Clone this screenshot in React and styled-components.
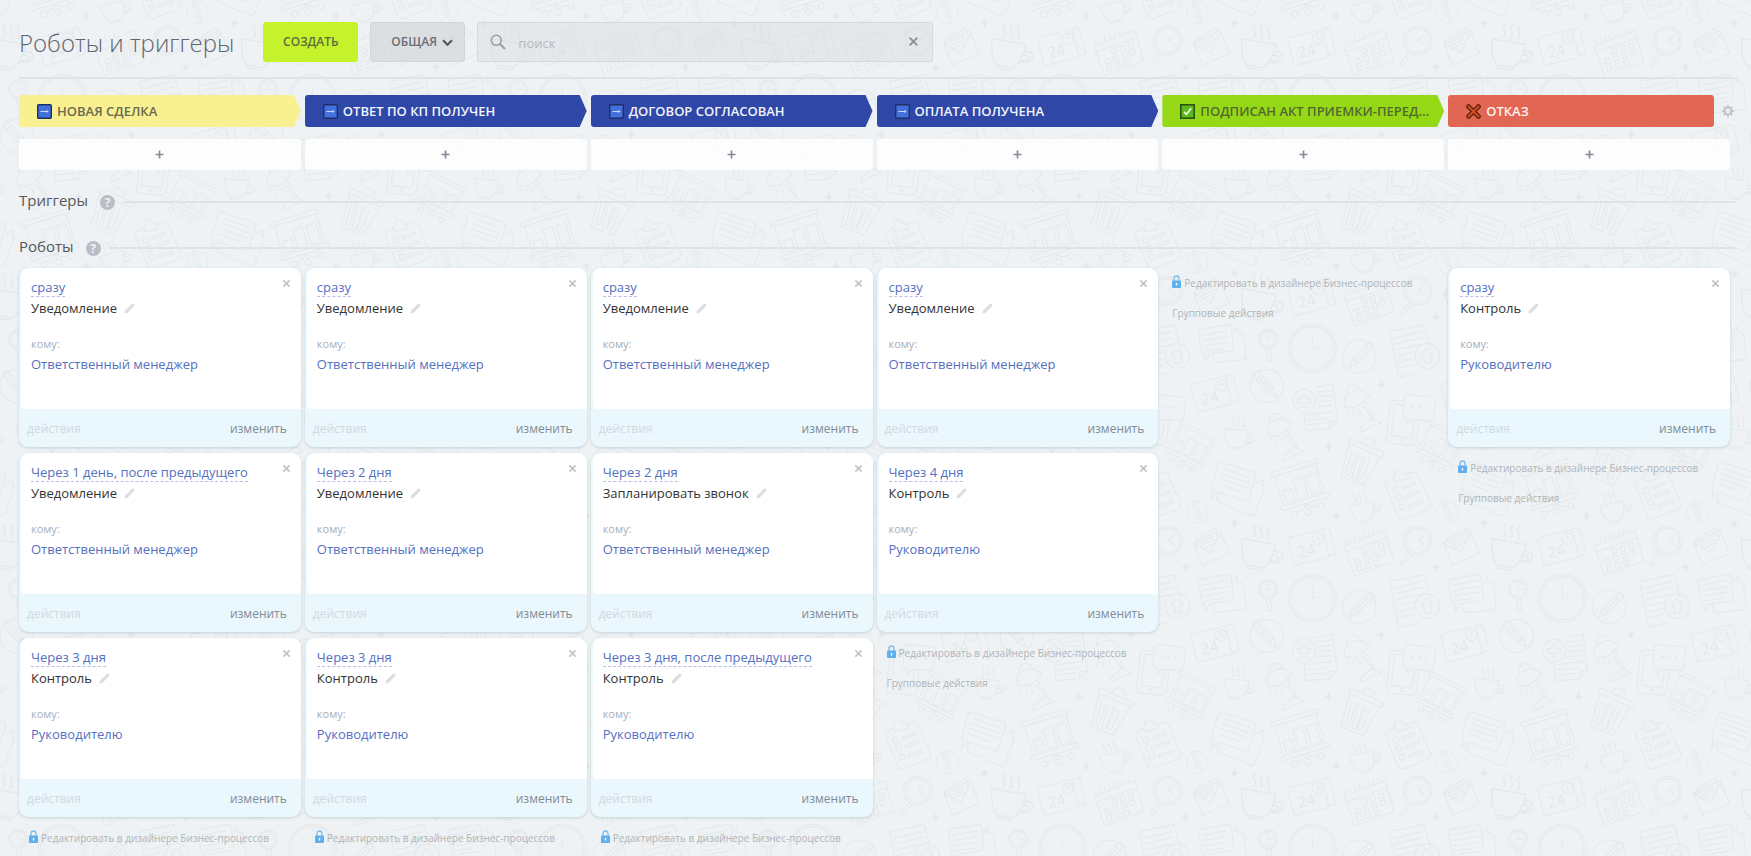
import React from "react";
import styled, { createGlobalStyle, css } from "styled-components";

/* ---------- wallpaper: one 250px tile, drawn on a 750 unit grid ---------- */

const note24 = (x, y) => `<g transform="translate(${x} ${y}) rotate(-14)">
  <rect x="-60" y="-42" width="108" height="86" rx="5"/><path d="M50 -42h14q6 0 6 6v70q0 6-6 6h-14"/>
  <circle cx="28" cy="-18" r="17"/><path d="M28 -29v11h9"/>
  <text x="-40" y="26" font-family="Open Sans, sans-serif" font-size="46" fill="#e4e7e9" stroke="none">24</text></g>`;

const lamp = (x, y) => `<g transform="translate(${x} ${y})">
  <path d="M-34 26q-6-20 8-34 34-28 66 2l-32 30q-20 12-42 2z"/><path d="M-28-10q-2-26 18-28 20 2 22 18"/>
  <path d="M22 14l10 4-4 14-12-4M28 32l22 34M38 30l18 34M14 90l34-28 28 14-26 10-34 18z"/>
  <path d="M-22 38l-6 14M-6 40l-2 16M8 36l6 14"/></g>`;

const board = (x, y, r, s) => `<g transform="translate(${x} ${y}) rotate(${r}) scale(${s})">
  <rect x="-76" y="-66" width="150" height="13" rx="6"/><rect x="-76" y="40" width="150" height="13" rx="6"/>
  <path d="M-66-53v93M64-53v93"/><rect x="-54" y="-2" width="26" height="36" rx="2"/>
  <rect x="-17" y="-26" width="30" height="60" rx="2"/><rect x="24" y="-26" width="30" height="60" rx="2"/>
  <path d="M0 53v18M-4 56q-4 14-32 14M4 56q4 14 32 14"/><circle cx="0" cy="80" r="9"/><circle cx="-42" cy="73" r="9"/><circle cx="42" cy="73" r="9"/></g>`;

const cup = (x, y, r, s) => `<g transform="translate(${x} ${y}) rotate(${r}) scale(${s})">
  <path d="M-38-28h76q0 36-18 56h-38q-18-20-20-56zM-16 34h32"/><path d="M36-12q22-6 22 10-2 16-26 14M37-4q12-2 12 6-2 8-14 6"/>
  <path d="M-14-36q6-8 0-15t0-14M2-36q6-8 0-15t0-14M18-36q6-8 0-15t0-14"/></g>`;

const pencil = (x, y, r, s) => `<g transform="translate(${x} ${y}) rotate(${r}) scale(${s})">
  <circle r="50"/><path d="M-10-52q10-8 20 0v70L0 44l-10-26zM-10-36h20M-10 18h20M0-36v54"/></g>`;

const star = (x, y) => `<path fill="#e5e8ea" d="M${x} ${y - 12}l3 9 8 3-8 3-3 9-3-9-8-3 8-3z"/>`;

const motifs = `
  <circle cx="187" cy="745" r="72"/><circle cx="187" cy="745" r="65"/>
  <path d="M187 710v34h34M187 686v6M187 798v6M128 745h6M240 745h6"/>
  <circle cx="54" cy="718" r="29"/><circle cx="54" cy="718" r="23"/><path d="M54 700v18h16M49 748v10l4 6-1 18h14l-3-18-1-16"/>
  ${pencil(328, 770, 45, 1)}${pencil(50, 108, -42, 1)}${pencil(592, 487, -18, 0.66)}
  <path d="M420 702q-4-12 14-10l88-18 20 72M420 702l26 130 54-13M430 715l84-20M433 732l86-20M436 750l78-17M439 768l52-12M442 786l46-10M445 804l44-10"/>
  <circle cx="532" cy="768" r="37"/><path d="M524 790l-3-24-10 2 17-22 22 15-9 4 3 22z"/>
  <path d="M601 688l82-15q10 0 11 8l6 62q0 9-8 10l-62 8-14 22-2-20q-8 0-9-8l-10-58q0-8 6-9zM606 706l74-14M608 722l74-12M610 738l74-12M612 753l56-8"/>
  <path d="M700 696l14-18-4 18 14 2q6 2 8 10l6 62q0 8-8 9l-78 9q-10 0-12-12l-2-14"/>
  <path d="M198 113l50-11 14 112-24 22-70 7-6-54M238 236l2-22 22 0M200 126l42-5M204 140l40-4M204 155l42-4M202 170l46-4M170 194l78-9M172 210l64-6M174 224l54-5"/>
  <circle cx="162" cy="152" r="34"/><path d="M156 132h12v14h14v12h-14v14h-12v-14h-14v-12h14z"/>
  ${lamp(318, 143)}${lamp(86, 228)}
  <path d="M458 152h-26q-10 0-12 10l-10 104q0 12 10 13l66 7q10 0 12-10l10-66M458 164h-24l-10 92 62 8 8-54"/><circle cx="454" cy="270" r="4"/>
  <path d="M474 133l74 8q10 2 9 12l-6 50q-2 9-12 9l-54-4-12 14v-16q-12 0-14-12l4-52q2-10 11-9z"/><path d="M486 170h4M506 172h4M526 174h4" stroke-width="6"/>
  ${note24(640, 130)}${note24(180, 590)}
  ${cup(708, 265, 6, 0.95)}${cup(340, 486, -16, 0.95)}${cup(20, 612, 10, 1.35)}
  ${board(152, 410, -17, 1)}${board(572, 290, 27, 0.84)}
  <path d="M300 264l98 42q6 5 2 12l-8 4-94-42q-6-6 2-16zM298 284l-26 96 68 26 50-84M338 276q4-14 16-12l16 6q8 6 2 18M306 304l-18 64q-2 8 4 8t8-6l18-60M326 312l-20 68q0 8 6 7t8-7l20-62M348 322l-26 62q0 8 6 6t8-6l24-56"/>
  <path d="M432 384l-22 10q-6 8-2 16l36 90q6 8 16 6l76-30q8-6 6-16l-38-86q-4-8-12-8l-26 6M430 382l4-8q0-18 14-14 14 2 10 10l18 8-2 8-40 10z"/>
  <path d="M428 416l14-5 6 15-14 5zM436 440l14-5 6 15-14 5zM446 466l14-5 6 15-14 5zM456 412l38-15 3 6-38 15zM464 438l42-16 3 6-42 16zM474 466l42-14 3 6-42 14z"/>
  <path d="M664 336l94 30q12 5 8 16l-20 64q-4 10-14 6l-78-26-20 18 6-26q-8-4-4-12l18-60q2-12 10-10zM672 356l80 28M666 370l82 30M662 386l80 28M656 402l66 24"/>
  <path d="M654 434l-2 14q0 8 8 10l90 38q10 4 14-4l30-80-8-4 4-18-22 10"/>
  <circle cx="503" cy="572" r="43"/><circle cx="503" cy="572" r="36"/><path d="M522 556l-16 14 18 16M478 608l-28 32q2 8 10 4l28-32"/>
  <path d="M580 578l80-36 28 68-80 36zM582 580l50 28 28-56M588 592l-2-22 62-36 6 30M594 580l48-22M598 590l46-22M604 598l42-20"/>
  <path d="M282 588l122-46 28 92-118 44zM288 606l122-42M288 580l-2-10M302 574l-2-10M316 569l-2-10M330 564l-2-10M344 559l-2-10M358 554l-2-10M372 549l-2-10M386 545l-2-10"/>
  <path d="M334 598l14-4 4 14-14 4zM359 590l14-4 4 14-14 4zM384 582l14-4 4 14-14 4zM314 628l14-4 4 14-14 4zM339 620l14-4 4 14-14 4zM364 612l14-4 4 14-14 4zM388 604l14-4 4 14-14 4zM319 650l14-4 4 14-14 4zM345 642l14-4 4 14-14 4zM370 634l14-4 4 14-14 4z"/>
  ${star(394, 104)}${star(236, 290)}${star(259, 498)}${star(703, 520)}${star(557, 652)}`;

const tile = `<svg xmlns="http://www.w3.org/2000/svg" width="250" height="250" viewBox="0 0 750 750">
  <g id="m" fill="none" stroke="#e6e9eb" stroke-width="3.4" stroke-linejoin="round" stroke-linecap="round">${motifs}</g>
  <use href="#m" x="750"/><use href="#m" x="-750"/><use href="#m" y="-750"/><use href="#m" x="-750" y="-750"/><use href="#m" x="750" y="-750"/></svg>`;

const wallpaper = `url("data:image/svg+xml,${encodeURIComponent(tile)}")`;

const GlobalStyle = createGlobalStyle`
  *, *::before, *::after { box-sizing: border-box; }
  body {
    margin: 0;
    min-height: 100vh;
    background: #eef2f4 ${wallpaper} 0 100px;
    font-family: "Open Sans", "Noto Sans", sans-serif;
    color: #333;
  }
  button, input, select { font-family: inherit; }
  button { border: 0; padding: 0; background: none; cursor: pointer; }
  a { text-decoration: none; }
`;

/* ---------- page parts ---------- */

const Page = styled.main`
  padding: 22px 16px 0 19px;
`;

const Toolbar = styled.header`
  display: flex;
  align-items: center;
  height: 57px;
  padding-bottom: 16px;
  border-bottom: 2px solid #e0e2e4;
`;

const Title = styled.h1`
  margin: 0 29px 0 0;
  padding-top: 2px;
  font-size: 24px;
  line-height: 38px;
  font-weight: 300;
  color: #5d6472;
  white-space: nowrap;
`;

const CreateButton = styled.button`
  width: 95px;
  height: 40px;
  margin-right: 12px;
  border-radius: 3px;
  background: #c6f22b;
  color: #5f6b43;
  font-size: 12px;
  font-weight: 600;
`;

const SelectBox = styled.div`
  position: relative;
  width: 95px;
  height: 40px;
  margin-right: 12px;

  svg {
    position: absolute;
    right: 12px;
    top: 17px;
    pointer-events: none;
  }
`;

const ScopeSelect = styled.select`
  appearance: none;
  width: 100%;
  height: 100%;
  padding: 0 0 0 20px;
  border: 1px solid #d3d6d8;
  border-radius: 3px;
  background: rgba(205, 208, 210, 0.55);
  color: #6b6f73;
  font-size: 12px;
  font-weight: 600;
`;

const SearchBox = styled.form`
  display: flex;
  align-items: center;
  flex: 0 1 456px;
  height: 40px;
  padding: 0 13px 0 12px;
  border: 1px solid #d5d9db;
  border-radius: 2px;
  background: rgba(216, 220, 223, 0.45);
`;

const SearchInput = styled.input`
  flex: 1;
  min-width: 0;
  padding: 2px 12px 0;
  border: 0;
  outline: 0;
  background: none;
  font-size: 13px;
  color: #555;

  &::placeholder { color: #b4b9be; opacity: 1; }
`;

const Columns = styled.div`
  display: grid;
  grid-template-columns: repeat(6, minmax(0, 1fr));
  gap: 4px;
  align-items: start;
  margin-right: 5px;
`;

const StageCell = styled.div`
  display: flex;
  flex-direction: column;
  gap: 12px;
  padding-top: 16px;
`;

const StageTop = styled.div`
  display: flex;
  align-items: center;
  justify-content: space-between;
`;

const Stage = styled.div`
  display: flex;
  align-items: center;
  gap: 5px;
  flex: 1;
  min-width: 0;
  height: 32px;
  padding: 0 18px;
  border-radius: 3px;
  background: ${(p) => p.$bg};
  color: ${(p) => p.$ink};
  font-size: 13px;
  font-weight: 600;
  white-space: nowrap;
  ${(p) =>
    p.$arrow &&
    css`
      clip-path: polygon(0 0, calc(100% - 7px) 0, 100% 50%, calc(100% - 7px) 100%, 0 100%);
    `}

  svg { flex: none; }
`;

const GearButton = styled.button`
  display: flex;
  margin: 0 -4px 0 8px;
`;

const AddButton = styled.button`
  display: flex;
  align-items: center;
  justify-content: center;
  height: 31px;
  border-radius: 3px;
  background: rgba(255, 255, 255, 0.85);
`;

const Section = styled.div`
  display: flex;
  align-items: center;
  height: 24px;
  margin-top: ${(p) => p.$gap}px;

  &::after {
    content: "";
    flex: 1;
    height: 2px;
    margin-left: 8px;
    background: #e0e2e4;
  }
`;

const SectionTitle = styled.h2`
  margin: 0;
  padding-bottom: 4px;
  font-size: 15px;
  line-height: 20px;
  font-weight: 400;
  color: #55585c;
`;

const HelpButton = styled.button`
  width: 15px;
  height: 15px;
  margin-left: 12px;
  border-radius: 50%;
  background: #b9bdc6;
  color: #eef2f4;
  font-size: 12px;
  line-height: 15px;
  font-weight: 700;
`;

const Board = styled(Columns)`
  padding-top: 8px;
`;

const RobotList = styled.div`
  display: flex;
  flex-direction: column;
  gap: 6px;
`;

const Card = styled.article`
  border-radius: 9px;
  background: #eaf7fd;
  box-shadow: 0 1px 3px rgba(120, 150, 165, 0.35);
  overflow: hidden;
`;

const CardBody = styled.div`
  position: relative;
  display: flex;
  flex-direction: column;
  align-items: flex-start;
  height: 141px;
  margin-left: 2px;
  padding: 11px 10px 0;
  border-radius: 8px 0 0 4px;
  background: #fff;
`;

const Delay = styled.a`
  font-size: 13px;
  line-height: 17px;
  color: #5570c0;
  border-bottom: 1px dashed #b4c0e4;
`;

const RobotName = styled.h3`
  display: flex;
  align-items: center;
  gap: 7px;
  margin: 1px 0 16px;
  font-size: 13px;
  line-height: 20px;
  font-weight: 400;
  color: #333;
`;

const FieldLabel = styled.span`
  font-size: 11px;
  line-height: 20px;
  color: #a9adba;
`;

const Person = styled.a`
  font-size: 13px;
  line-height: 20px;
  color: #5570c0;
`;

const CloseButton = styled.button`
  position: absolute;
  top: 11px;
  right: 10px;
  display: flex;
`;

const CardFooter = styled.div`
  display: flex;
  align-items: center;
  justify-content: space-between;
  height: 38px;
  padding: 2px 14px 0 8px;
`;

const FooterLink = styled.a`
  font-size: 12px;
  line-height: 20px;
  color: ${(p) => (p.$faint ? "#cfdae2" : "#7f8d96")};
`;

const LinkList = styled.nav`
  display: flex;
  flex-direction: column;
  align-items: flex-start;
  padding: 0 10px;
`;

const ToolLink = styled.a`
  display: flex;
  align-items: center;
  gap: 3px;
  font-size: 10px;
  line-height: 30px;
  color: #b0b5b9;
  white-space: nowrap;

  svg { margin-bottom: 3px; }
`;

/* ---------- icons ---------- */

const Cross = ({ size, color, width }) => (
  <svg width={size} height={size} viewBox="0 0 10 10" aria-hidden="true">
    <path d="M1.5 1.5l7 7M8.5 1.5l-7 7" stroke={color} strokeWidth={width} />
  </svg>
);

const Plus = () => (
  <svg width="9" height="9" viewBox="0 0 9 9" aria-hidden="true">
    <path d="M4.500.500v8M.500 4.500h8" stroke="#868b97" strokeWidth="1.700" />
  </svg>
);

const Pencil = () => (
  <svg width="11" height="11" viewBox="0 0 11 11" aria-hidden="true">
    <path d="M.4 10.600l.7-3L7.900.8a1.200 1.200 0 0 1 1.600 0l.7.700a1.200 1.200 0 0 1 0 1.600L3.400 9.900z" fill="#dcdedf" />
  </svg>
);

const Lock = () => (
  <svg width="9" height="13" viewBox="0 0 9 13" aria-hidden="true">
    <path d="M2 6V3.500a2.500 2.500 0 0 1 5 0V6" fill="none" stroke="#7dbdec" strokeWidth="1.300" />
    <rect y="5.500" width="9" height="7.500" rx=".8" fill="#5fb0ec" />
    <path d="M4.500 8v2.500" stroke="#fff" strokeWidth="1.300" />
  </svg>
);

const Magnifier = () => (
  <svg width="16" height="16" viewBox="0 0 16 16" aria-hidden="true">
    <circle cx="6.300" cy="6.300" r="5" fill="none" stroke="#9aa0a6" strokeWidth="1.600" />
    <path d="M10 10l5 5" stroke="#9aa0a6" strokeWidth="2.200" />
  </svg>
);

const Gear = () => (
  <svg width="12" height="12" viewBox="0 0 12 12" aria-hidden="true">
    <circle cx="6" cy="6" r="3.400" fill="none" stroke="#c0c4c8" strokeWidth="2" />
    <path
      d="M6 0v2M6 10v2M0 6h2M10 6h2M1.800 1.800l1.300 1.300M8.900 8.900l1.300 1.300M1.800 10.200l1.300-1.300M8.900 3.100l1.300-1.300"
      stroke="#c0c4c8"
      strokeWidth="1.900"
    />
  </svg>
);

const stageIcons = {
  arrow: (
    <svg width="15" height="15" viewBox="0 0 15 15" aria-hidden="true">
      <rect x=".7" y=".7" width="13.600" height="13.600" rx="1" fill="#4270dc" stroke="#1d2f66" strokeWidth="1.400" />
      <path d="M3.500 7.500h7" stroke="#c9d8fa" strokeWidth="1.100" />
      <path d="M9.300 5.900l2.400 1.600-2.400 1.600z" fill="#c9d8fa" />
    </svg>
  ),
  check: (
    <svg width="15" height="15" viewBox="0 0 15 15" aria-hidden="true">
      <rect x=".8" y=".8" width="13.400" height="13.400" fill="#5cb81c" stroke="#2c5410" strokeWidth="1.600" />
      <path d="M4 7.800l2.400 2.500 4.800-6" fill="none" stroke="#f0ffe6" strokeWidth="1.700" />
    </svg>
  ),
  cross: (
    <svg width="15" height="15" viewBox="0 0 15 15" aria-hidden="true">
      <path d="M2.600 2.600l9.800 9.800M12.400 2.600l-9.800 9.800" stroke="#5f2413" strokeWidth="4.600" strokeLinecap="square" />
      <path d="M2.600 2.600l9.800 9.800M12.400 2.600l-9.800 9.800" stroke="#d6501c" strokeWidth="2" strokeLinecap="square" />
    </svg>
  ),
};

/* ---------- data ---------- */

const manager = "Ответственный менеджер";
const head = "Руководителю";

const stages = [
  {
    name: "НОВАЯ СДЕЛКА", icon: "arrow", bg: "#f9f092", ink: "#6d6a50",
    robots: [
      ["сразу", "Уведомление", manager],
      ["Через 1 день, после предыдущего", "Уведомление", manager],
      ["Через 3 дня", "Контроль", head],
    ],
  },
  {
    name: "ОТВЕТ ПО КП ПОЛУЧЕН", icon: "arrow", bg: "#2f47a6", ink: "#f1f4fd",
    robots: [
      ["сразу", "Уведомление", manager],
      ["Через 2 дня", "Уведомление", manager],
      ["Через 3 дня", "Контроль", head],
    ],
  },
  {
    name: "ДОГОВОР СОГЛАСОВАН", icon: "arrow", bg: "#2f47a6", ink: "#f1f4fd",
    robots: [
      ["сразу", "Уведомление", manager],
      ["Через 2 дня", "Запланировать звонок", manager],
      ["Через 3 дня, после предыдущего", "Контроль", head],
    ],
  },
  {
    name: "ОПЛАТА ПОЛУЧЕНА", icon: "arrow", bg: "#2f47a6", ink: "#f1f4fd", group: true,
    robots: [
      ["сразу", "Уведомление", manager],
      ["Через 4 дня", "Контроль", head],
    ],
  },
  {
    name: "ПОДПИСАН АКТ ПРИЕМКИ-ПЕРЕД...", icon: "check", bg: "#95d916", ink: "#52682f", group: true,
    robots: [],
  },
  {
    name: "ОТКАЗ", icon: "cross", bg: "#e26654", ink: "#fdf1ef", group: true, last: true,
    robots: [["сразу", "Контроль", head]],
  },
];

/* ---------- components ---------- */

const RobotCard = ({ delay, name, person }) => (
  <Card>
    <CardBody>
      <Delay href="#delay">{delay}</Delay>
      <RobotName>
        {name}
        <Pencil />
      </RobotName>
      <FieldLabel>кому:</FieldLabel>
      <Person href="#person">{person}</Person>
      <CloseButton type="button" aria-label="Удалить">
        <Cross size={9} color="#c3c6c9" width={2} />
      </CloseButton>
    </CardBody>
    <CardFooter>
      <FooterLink href="#actions" $faint>действия</FooterLink>
      <FooterLink href="#edit">изменить</FooterLink>
    </CardFooter>
  </Card>
);

const SectionHead = ({ title, gap }) => (
  <Section $gap={gap}>
    <SectionTitle>{title}</SectionTitle>
    <HelpButton type="button">?</HelpButton>
  </Section>
);

export default function App() {
  return (
    <>
      <GlobalStyle />
      <Page>
        <Toolbar>
          <Title>Роботы и триггеры</Title>
          <CreateButton type="button">СОЗДАТЬ</CreateButton>
          <SelectBox>
            <ScopeSelect aria-label="Воронка">
              <option>ОБЩАЯ</option>
            </ScopeSelect>
            <svg width="11" height="8" viewBox="0 0 11 8" aria-hidden="true">
              <path d="M1 1.300l4.500 4.500L10 1.300" fill="none" stroke="#55585c" strokeWidth="2.200" />
            </svg>
          </SelectBox>
          <SearchBox role="search">
            <Magnifier />
            <SearchInput type="text" placeholder="поиск" aria-label="поиск" />
            <button type="button" aria-label="Очистить">
              <Cross size={11} color="#8d9297" width={1.800} />
            </button>
          </SearchBox>
        </Toolbar>

        <Columns>
          {stages.map((s) => (
            <StageCell key={s.name}>
              <StageTop>
                <Stage $bg={s.bg} $ink={s.ink} $arrow={!s.last}>
                  {stageIcons[s.icon]}
                  {s.name}
                </Stage>
                {s.last && (
                  <GearButton type="button" aria-label="Настройки">
                    <Gear />
                  </GearButton>
                )}
              </StageTop>
              <AddButton type="button" aria-label="Добавить">
                <Plus />
              </AddButton>
            </StageCell>
          ))}
        </Columns>

        <SectionHead title="Триггеры" gap={20} />
        <SectionHead title="Роботы" gap={22} />

        <Board>
          {stages.map((s) => (
            <RobotList key={s.name}>
              {s.robots.map(([delay, name, person]) => (
                <RobotCard key={delay} delay={delay} name={name} person={person} />
              ))}
              <LinkList>
                <ToolLink href="#designer">
                  <Lock />
                  Редактировать в дизайнере Бизнес-процессов
                </ToolLink>
                {s.group && <ToolLink href="#group">Групповые действия</ToolLink>}
              </LinkList>
            </RobotList>
          ))}
        </Board>
      </Page>
    </>
  );
}
